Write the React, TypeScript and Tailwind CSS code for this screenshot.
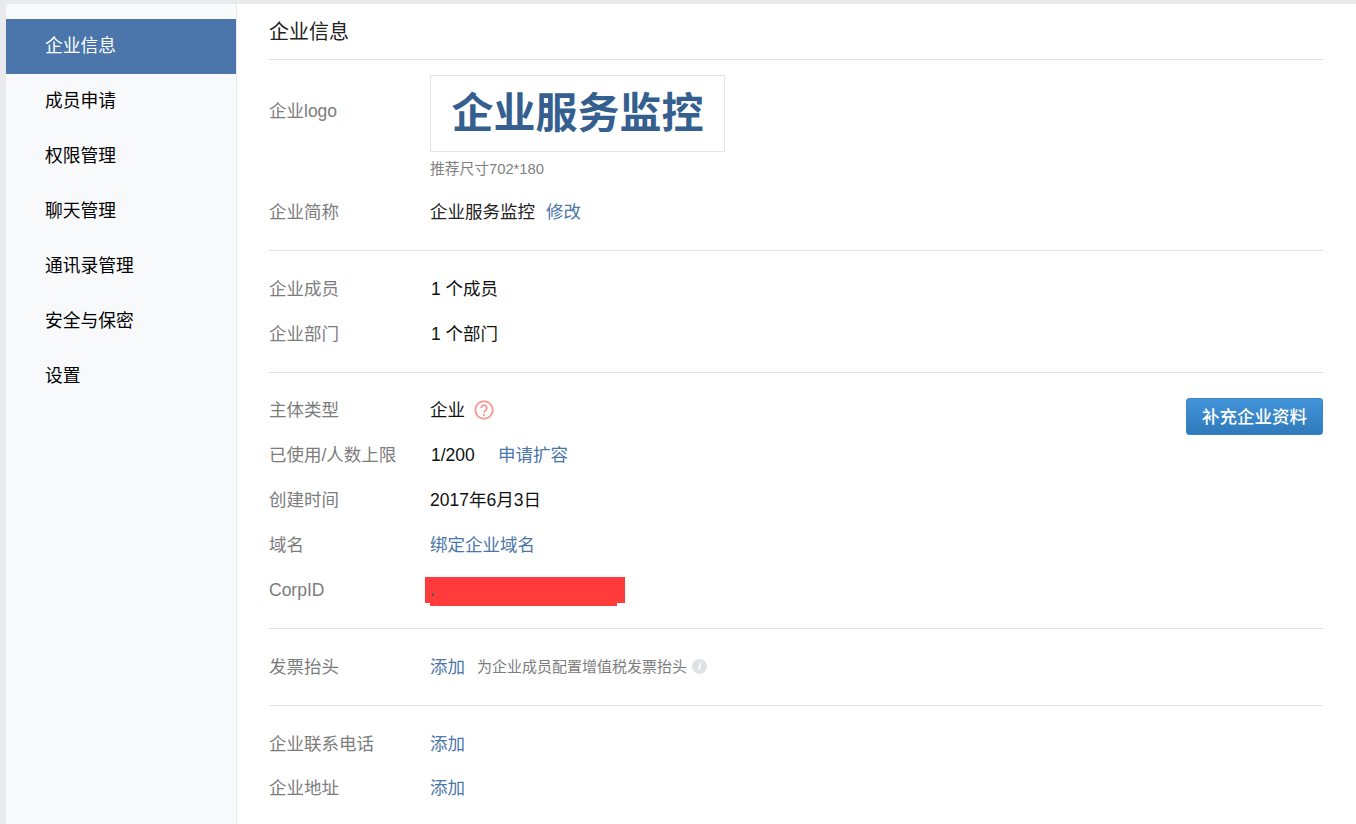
const navItems = [
  "企业信息",
  "成员申请",
  "权限管理",
  "聊天管理",
  "通讯录管理",
  "安全与保密",
  "设置",
];

const font = {
  cjk: "font-['Liberation_Sans','Noto_Sans_CJK_SC',sans-serif]",
};

function Row({
  label,
  height = "h-[45px]",
  children,
}: {
  label: string;
  height?: string;
  children?: React.ReactNode;
}) {
  return (
    <div className={`flex items-center ${height}`}>
      <div className="w-[161px] shrink-0 text-[#7c7c7c]">{label}</div>
      <div className="flex items-center">{children}</div>
    </div>
  );
}

function A({ children }: { children: React.ReactNode }) {
  return <a className="text-[#4a76a8]">{children}</a>;
}

export default function App() {
  return (
    <div
      className={`${font.cjk} h-[824px] overflow-hidden bg-[#e9eaec] pt-[4px] pl-[6px] text-[17.5px] leading-[26px] text-[#111]`}
    >
      <div className="flex h-full overflow-hidden rounded-tl-[4px] bg-white">
        {/* Sidebar */}
        <aside className="w-[231px] shrink-0 border-r border-[#e4e8ee] bg-[#f8f9fb] pt-[15px] text-[17.75px] leading-[27px]">
          {navItems.map((item, i) => (
            <div
              key={item}
              className={`flex h-[55px] items-center pl-[39px] ${
                i === 0 ? "bg-[#4a76ac] text-white" : "text-black"
              }`}
            >
              {item}
            </div>
          ))}
        </aside>

        {/* Main content */}
        <main className="min-w-0 flex-1 pl-[32px] pr-[33px]">
          <div className="flex h-[56px] items-center border-b border-[#e2e2e2] text-[20px] text-[#222]">
            企业信息
          </div>

          <div className="border-b border-[#e2e2e2] pt-[15px] pb-[16px]">
            <div className="flex">
              <div className="w-[161px] shrink-0 pt-[23px] text-[#7c7c7c]">企业logo</div>
              <div>
                <div className="flex h-[77px] w-[295px] items-center justify-center border border-[#e4e4e4] text-[42px] font-bold text-[#345f8f]">
                  企业服务监控
                </div>
                <div className="mt-[4px] text-[14.75px] leading-[26px] text-[#808080]">
                  推荐尺寸702*180
                </div>
              </div>
            </div>
            <div className="mt-[8px]">
              <Row label="企业简称" height="h-[44px]">
                <span className="text-[#222]">企业服务监控</span>
                <span className="ml-[11px]">
                  <A>修改</A>
                </span>
              </Row>
            </div>
          </div>

          <div className="border-b border-[#e2e2e2] pt-[15px] pb-[16px]">
            <Row label="企业成员">
              <span className="pl-[1px]">1 个成员</span>
            </Row>
            <Row label="企业部门">
              <span className="pl-[1px]">1 个部门</span>
            </Row>
          </div>

          <div className="flex justify-between border-b border-[#e2e2e2] pt-[14px] pb-[15px]">
            <div>
              <Row label="主体类型">
                <span>企业</span>
                <svg viewBox="0 0 20 20" className="ml-[9px] h-[20px] w-[20px]">
                  <circle cx="10" cy="10" r="8.7" fill="none" stroke="#fb9b94" strokeWidth="2" />
                  <path
                    d="M7.2 8a2.8 2.8 0 1 1 4.4 2.3c-1 .7-1.6 1.1-1.6 2.3"
                    fill="none"
                    stroke="#f98f88"
                    strokeWidth="1.7"
                  />
                  <circle cx="10" cy="15" r="1.1" fill="#f98f88" />
                </svg>
              </Row>
              <Row label="已使用/人数上限">
                <span className="w-[68px] pl-[1px]">1/200</span>
                <A>申请扩容</A>
              </Row>
              <Row label="创建时间">2017年6月3日</Row>
              <Row label="域名">
                <A>绑定企业域名</A>
              </Row>
              <div className="relative">
                <Row label="CorpID" height="h-[46px]" />
                {/* redaction scribble over the id */}
                <div className="absolute top-[10px] left-[156px] h-[26px] w-[200px] bg-[#ff3b3b]" />
                <div className="absolute top-[10px] left-[161px] h-[29px] w-[187px] bg-[#ff3b3b]" />
                <div className="absolute top-[26px] left-[163px] h-[3px] w-[2px] bg-[#665555]" />
              </div>
            </div>
            <button className="mt-[11px] h-[37px] w-[137px] rounded-[3px] border border-[#3a86c8] bg-gradient-to-b from-[#4394da] to-[#2f7abb] text-[17.5px] font-medium text-white">
              补充企业资料
            </button>
          </div>

          <div className="border-b border-[#e2e2e2] pt-[15px] pb-[16px]">
            <Row label="发票抬头">
              <A>添加</A>
              <span className="ml-[12px] text-[15px] text-[#7c7c7c]">为企业成员配置增值税发票抬头</span>
              <span className="ml-[5px] flex h-[15px] w-[15px] items-center justify-center rounded-full bg-[#dfe1e5] text-[11px] leading-none font-bold text-white italic">
                i
              </span>
            </Row>
          </div>

          <div className="pt-[15px]">
            <Row label="企业联系电话">
              <A>添加</A>
            </Row>
            <Row label="企业地址" height="h-[44px]">
              <A>添加</A>
            </Row>
          </div>
        </main>
      </div>
    </div>
  );
}
